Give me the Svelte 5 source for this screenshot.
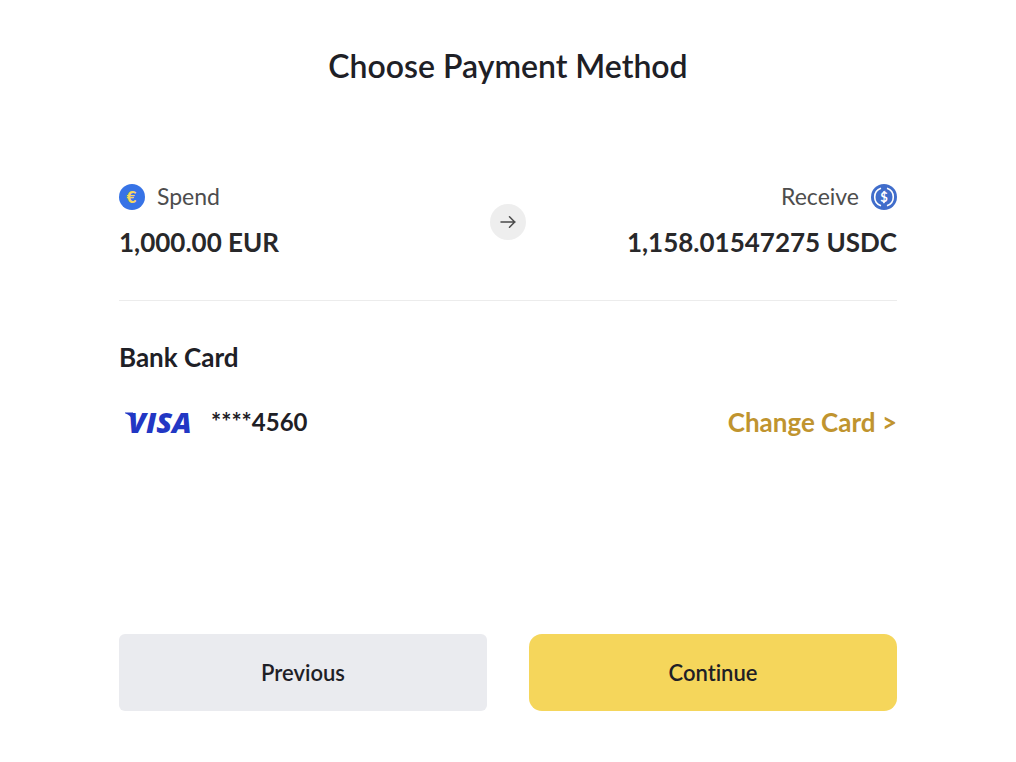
<script lang="ts">
  interface Amount {
    label: string;
    value: string;
    currency: string;
  }

  let spend: Amount = $state({ label: 'Spend', value: '1,000.00', currency: 'EUR' });
  let receive: Amount = $state({ label: 'Receive', value: '1,158.01547275', currency: 'USDC' });
  let lastDigits = $state('4560');
</script>

<main class="page">
  <h1>Choose Payment Method</h1>

  <section class="summary">
    <div class="side">
      <div class="label">
        <svg class="coin" viewBox="0 0 26 26" aria-hidden="true">
          <circle cx="13" cy="13" r="13" fill="#3773e6" />
          <text class="glyph" x="12.5" y="19" font-size="17" fill="#f6d75c">€</text>
        </svg>
        <span>{spend.label}</span>
      </div>
      <div class="amount">{spend.value} {spend.currency}</div>
    </div>

    <div class="arrow">
      <svg viewBox="0 0 18 18" width="18" height="18" aria-hidden="true">
        <path
          d="M2 9H16M10.5 3.8L15.7 9L10.5 14.2"
          fill="none"
          stroke="#4a4a4a"
          stroke-width="1.5"
          stroke-linecap="round"
          stroke-linejoin="round"
        />
      </svg>
    </div>

    <div class="side end">
      <div class="label">
        <span>{receive.label}</span>
        <svg class="coin" viewBox="0 0 26 26" aria-hidden="true">
          <circle cx="13" cy="13" r="13" fill="#406dcb" />
          <path
            d="M10 4.2A9.3 9.3 0 0 0 10 21.8M16 4.2A9.3 9.3 0 0 1 16 21.8"
            fill="none"
            stroke="#fff"
            stroke-width="1.6"
          />
          <path d="M13 7V9M13 17V19" stroke="#fff" stroke-width="1.4" />
          <text class="glyph thin" x="13" y="17.5" font-size="13" fill="#fff">$</text>
        </svg>
      </div>
      <div class="amount">{receive.value} {receive.currency}</div>
    </div>
  </section>

  <section class="method">
    <h2>Bank Card</h2>
    <div class="card">
      <svg class="visa" viewBox="0 0 72 44" role="img" aria-label="Visa">
        <path d="M6 11.5H14L14.5 21Q12 14 6 12.3Z" fill="#2237c4" />
        <text x="9" y="32" font-size="29" fill="#2237c4">VISA</text>
      </svg>
      <span class="number">****{lastDigits}</span>
      <a class="change" href="#change-card">Change Card &gt;</a>
    </div>
  </section>

  <footer class="actions">
    <button type="button" class="previous">Previous</button>
    <button type="button" class="continue">Continue</button>
  </footer>
</main>

<style>
  :global(body) {
    margin: 0;
    background: #fff;
  }
  .page {
    box-sizing: border-box;
    min-height: 100vh;
    padding: 46px 119px 51px;
    display: flex;
    flex-direction: column;
    font-family: Lato, 'Liberation Sans', sans-serif;
    font-variant-ligatures: none;
    color: #1e2026;
  }
  h1 {
    margin: 0 0 95px;
    font-size: 32px;
    line-height: 40px;
    font-weight: 600;
    text-align: center;
  }
  .summary {
    display: flex;
    align-items: center;
    padding-bottom: 38px;
    border-bottom: 1px solid #ececec;
  }
  .side {
    flex: 1;
  }
  .end {
    text-align: right;
  }
  .label {
    display: flex;
    align-items: center;
    gap: 12px;
    height: 32px;
    font-size: 23px;
    line-height: 28px;
    color: #4d4d4d;
  }
  .label span {
    padding-bottom: 2px;
  }
  .end .label {
    justify-content: flex-end;
  }
  .coin {
    width: 26px;
    height: 26px;
  }
  .glyph {
    font-weight: 900;
    text-anchor: middle;
  }
  .thin {
    font-weight: 700;
  }
  .amount {
    margin-top: 13px;
    padding-bottom: 4px;
    font-size: 26px;
    line-height: 32px;
    font-weight: 700;
    color: #28282a;
  }
  .arrow {
    display: flex;
    align-items: center;
    justify-content: center;
    width: 36px;
    height: 36px;
    border-radius: 50%;
    background: #eee;
  }
  h2 {
    margin: 40px 0 28px;
    font-size: 26px;
    line-height: 32px;
    font-weight: 700;
  }
  .card {
    display: flex;
    align-items: center;
    font-size: 26px;
    line-height: 32px;
    font-weight: 700;
  }
  .number,
  .change {
    padding-bottom: 2px;
  }
  .number {
    font-size: 24px;
  }
  .visa {
    width: 72px;
    height: 44px;
    margin-right: 20px;
    font-family: 'Open Sans', sans-serif;
    font-weight: 800;
    font-style: italic;
  }
  .change {
    margin-left: auto;
    color: #c0942f;
    text-decoration: none;
  }
  .actions {
    display: flex;
    gap: 42px;
    margin-top: auto;
  }
  button {
    flex: 1;
    height: 77px;
    border: 0;
    font: inherit;
    font-size: 22px;
    font-weight: 600;
    color: #1e2026;
    cursor: pointer;
  }
  .previous {
    border-radius: 6px;
    background: #eaebef;
  }
  .continue {
    border-radius: 13px;
    background: #f5d65b;
  }
</style>
